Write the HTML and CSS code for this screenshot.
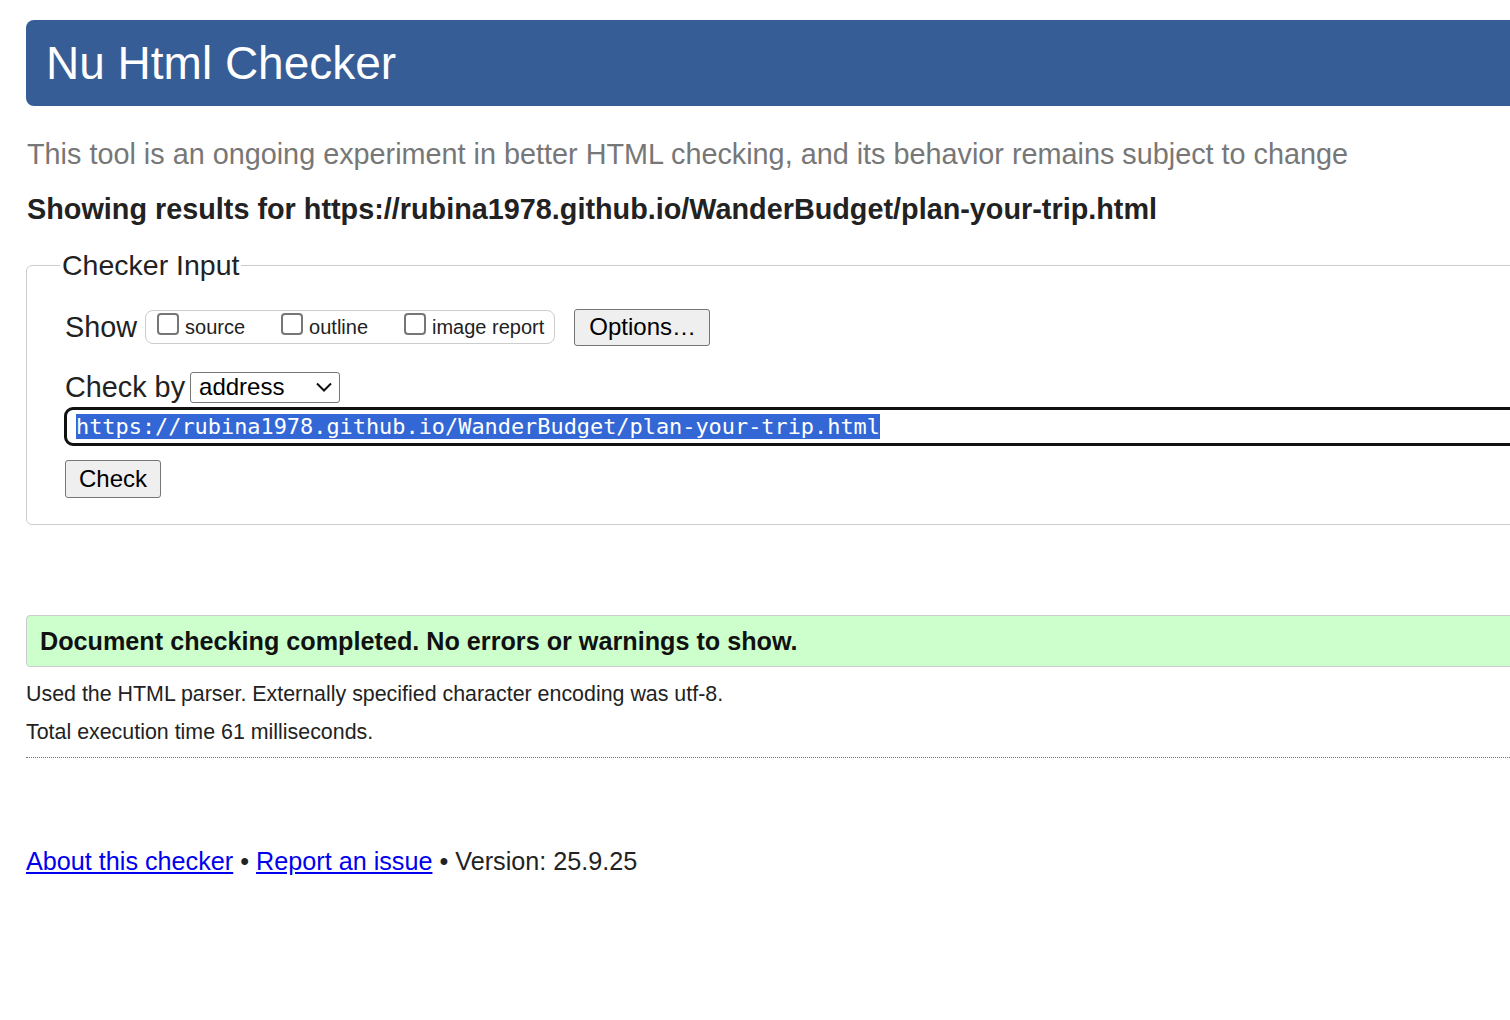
FILE: index.html
```html
<!DOCTYPE html>
<html lang="en">
<head>
<meta charset="utf-8">
<title>Nu Html Checker</title>
<link rel="stylesheet" href="styles.css">
</head>
<body>
<div class="page">
  <h1 class="banner">Nu Html Checker</h1>
  <p class="tagline">This tool is an ongoing experiment in better HTML checking, and its behavior remains subject to change</p>
  <p class="showing">Showing results for https://rubina1978.github.io/WanderBudget/plan-your-trip.html</p>
  <fieldset class="input-box">
    <legend class="legend">Checker Input</legend>
    <div class="show-row">
      <span class="row-label">Show</span>
      <span class="pill">
        <label class="opt"><span class="cb"></span>source</label>
        <label class="opt"><span class="cb"></span>outline</label>
        <label class="opt"><span class="cb"></span>image report</label>
      </span>
      <button class="btn options">Options…</button>
    </div>
    <div class="checkby-row">
      <span class="row-label">Check by</span>
      <span class="select">address
        <svg class="chev" width="18" height="10" viewBox="0 0 18 10"><path d="M2 1.5 L9 8.5 L16 1.5" fill="none" stroke="#111" stroke-width="2"/></svg>
      </span>
    </div>
    <div class="url-input"><span class="sel">https://rubina1978.github.io/WanderBudget/plan-your-trip.html</span></div>
    <button class="btn check">Check</button>
  </fieldset>
  <div class="success">Document checking completed. No errors or warnings to show.</div>
  <p class="info">Used the HTML parser. Externally specified character encoding was utf-8.</p>
  <p class="info">Total execution time 61 milliseconds.</p>
  <hr class="dots">
  <p class="footer"><a href="#">About this checker</a> • <a href="#">Report an issue</a> • Version: 25.9.25</p>
</div>
</body>
</html>
```

FILE: styles.css
```css
html {
  overflow: hidden;
}
body {
  margin: 0;
  background: #fff;
  font-family: "Liberation Sans", Arial, sans-serif;
  color: #222;
}
.page {
  width: 1600px;
  padding: 20px 0 0 26px;
}
.banner {
  margin: 0;
  height: 86px;
  line-height: 86px;
  padding-left: 20px;
  background: #365d95;
  color: #fff;
  font-size: 46px;
  font-weight: normal;
  border-radius: 8px;
}
.tagline {
  margin: 30px 0 0 1px;
  font-size: 28.8px;
  line-height: 36px;
  color: #777;
}
.showing {
  margin: 19px 0 0 1px;
  font-size: 28.8px;
  font-weight: bold;
  line-height: 36px;
  color: #222;
}
.input-box {
  margin: 22px 0 0 0;
  border: 1px solid #ccc;
  border-radius: 6px;
  padding: 25px 0 26px 38px;
}
.legend {
  font-size: 28.5px;
  padding: 0 2px;
  margin-left: -5px;
  color: #222;
}
.show-row {
  display: flex;
  align-items: center;
  height: 40px;
}
.row-label {
  font-size: 28.8px;
  color: #222;
}
.pill {
  display: flex;
  align-items: center;
  margin-left: 8px;
  height: 32px;
  padding: 0 10px 0 11px;
  border: 1px solid #ccc;
  border-radius: 8px;
  gap: 36px;
}
.opt {
  display: flex;
  align-items: center;
  font-size: 20px;
  color: #222;
  gap: 6px;
}
.cb {
  width: 18px;
  height: 18px;
  border: 2px solid #767676;
  border-radius: 4px;
  margin-top: -6px;
}
.btn {
  font-family: "Liberation Sans", Arial, sans-serif;
  font-size: 24px;
  color: #000;
  background: #efefef;
  border: 1px solid #767676;
  border-radius: 3px;
}
.options {
  margin-left: 19px;
  height: 37px;
  padding: 0 13px 0 14px;
}
.checkby-row {
  display: flex;
  align-items: center;
  margin-top: 22px;
  height: 36px;
}
.select {
  display: flex;
  align-items: center;
  justify-content: space-between;
  margin-left: 5px;
  width: 150px;
  height: 31px;
  box-sizing: border-box;
  border: 1px solid #767676;
  border-radius: 3px;
  padding: 0 6px 0 8px;
  font-size: 24px;
  color: #000;
}
.chev {
  display: block;
}
.url-input {
  margin: 2px 0 0 -1px;
  height: 39px;
  box-sizing: border-box;
  border: 3px solid #111;
  border-radius: 9px;
  padding: 3px 0 0 9px;
  font-family: "DejaVu Sans Mono", monospace;
  font-size: 21.9px;
  line-height: 28px;
  white-space: nowrap;
}
.sel {
  background: #3367d6;
  color: #fff;
}
.check {
  display: block;
  margin-top: 14px;
  height: 38px;
  padding: 0 13px;
}
.success {
  margin: 90px 0 0 0;
  height: 52px;
  box-sizing: border-box;
  border: 1px solid #ccc;
  border-radius: 4px;
  background: #ccffcc;
  padding-left: 13px;
  font-size: 25.2px;
  font-weight: bold;
  line-height: 50px;
  color: #111;
}
.info {
  margin: 12px 0 0 0;
  font-size: 21.4px;
  line-height: 26px;
  color: #222;
}
.success + .info {
  margin-top: 14px;
}
.dots {
  margin: 12px 0 0 0;
  border: 0;
  border-top: 1px dotted #777;
  height: 0;
}
.footer {
  margin: 88px 0 0 0;
  font-size: 25.2px;
  line-height: 30px;
  color: #222;
}
.footer a {
  color: #0000ee;
}
```
